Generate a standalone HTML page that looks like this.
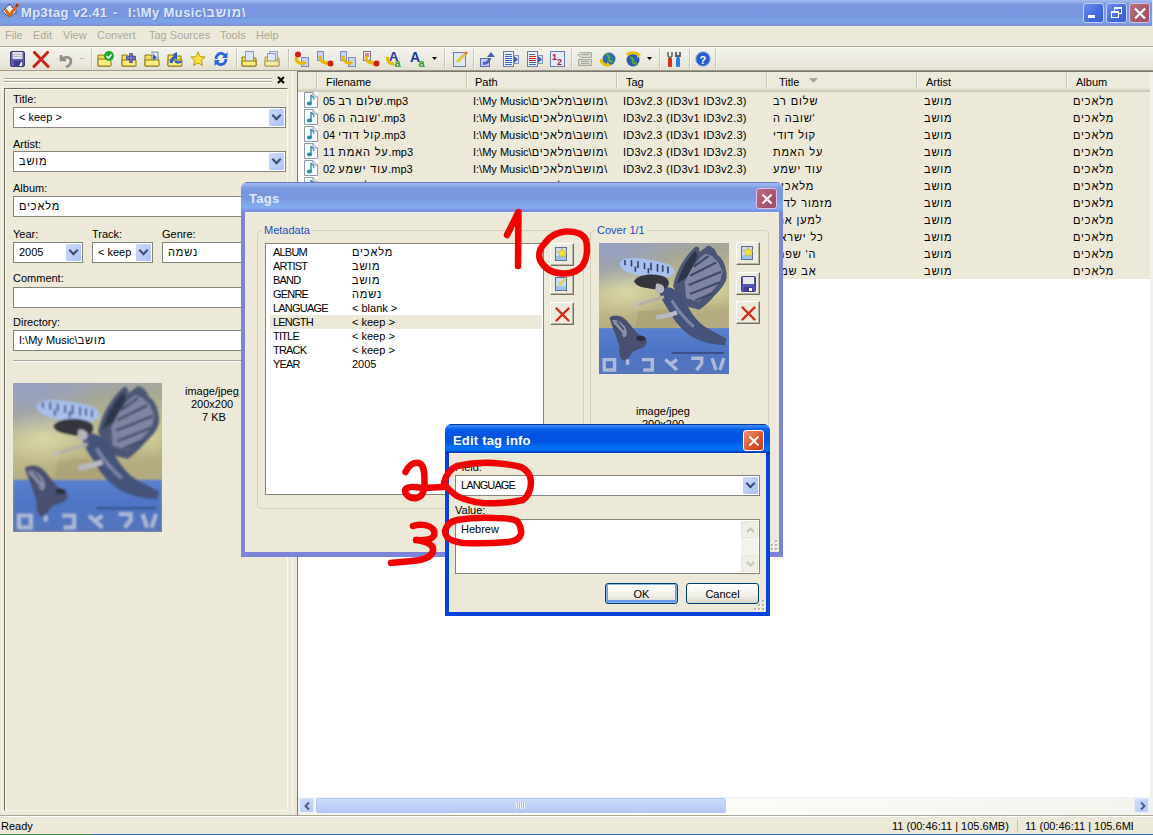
<!DOCTYPE html>
<html><head><meta charset="utf-8">
<style>
*{margin:0;padding:0;box-sizing:border-box}
html,body{width:1153px;height:835px;overflow:hidden;background:#ECE9D8;font:11px/13px "Liberation Sans",sans-serif;color:#000}
.a{position:absolute}
.t{position:absolute;white-space:pre;font:11px/13px "Liberation Sans",sans-serif}
.edit{position:absolute;background:#fff;border:1px solid #84847A}
.ddb{position:absolute;width:15px;top:1px;bottom:1px;right:1px;background:linear-gradient(135deg,#CCDAFC 0%,#BCCEF8 50%,#ADC2F2 100%);border-radius:1px}
.ddb:after{content:"";position:absolute;left:4px;top:3px;width:5px;height:5px;border-right:2.5px solid #3C4C70;border-bottom:2.5px solid #3C4C70;transform:rotate(45deg);}
.hdr{position:absolute;top:0;height:19px;border-right:1px solid #C7C5B2}
.row{position:absolute;left:0;width:852px;height:17px;background:#ECE9D8}
.xpbtn{position:absolute;background:linear-gradient(#FFFFFF,#F0F0EA 60%,#D8D6C8);border:1px solid #003C74;border-radius:3px}
.sep{position:absolute;top:49px;width:2px;height:20px;border-left:1px solid #C8C5B4;border-right:1px solid #F8F7F2}
.ficon{position:absolute;width:14px;height:16px}
.ttl{font:bold 13px/15px 'Liberation Sans';color:#DCE6FA;letter-spacing:0.4px;text-shadow:1px 1px 0 #6A80C8}
.he{letter-spacing:0.85px}
.tbtn{position:absolute;width:24px;height:23px;background:#EEEBDD;border-top:1px solid #fff;border-left:1px solid #fff;border-right:1px solid #716F64;border-bottom:1px solid #716F64;box-shadow:inset -1px -1px 0 #B8B5A6}
</style></head>
<body>
<svg width="0" height="0" style="position:absolute">
<defs>
<linearGradient id="gbg" x1="0" y1="0" x2="0.15" y2="1">
<stop offset="0" stop-color="#9AA2B8"/><stop offset="0.2" stop-color="#A8A894"/><stop offset="0.42" stop-color="#C4C090"/><stop offset="0.66" stop-color="#B4AC80"/></linearGradient>
<radialGradient id="gglow" cx="0.2" cy="0.55" r="0.3"><stop offset="0" stop-color="#DCD8A8" stop-opacity="0.9"/><stop offset="1" stop-color="#DCD8A8" stop-opacity="0"/></radialGradient>
<radialGradient id="gglow2" cx="0.9" cy="0.55" r="0.22"><stop offset="0" stop-color="#D4D09A" stop-opacity="0.9"/><stop offset="1" stop-color="#D4D09A" stop-opacity="0"/></radialGradient>
<radialGradient id="gsky" cx="0.1" cy="0.05" r="0.5"><stop offset="0" stop-color="#96A0C4" stop-opacity="0.9"/><stop offset="1" stop-color="#96A0C4" stop-opacity="0"/></radialGradient>
<linearGradient id="gwater" x1="0" y1="0" x2="0" y2="1"><stop offset="0" stop-color="#5A80D0"/><stop offset="0.5" stop-color="#4E74C4"/><stop offset="1" stop-color="#5474BC"/></linearGradient>
<filter id="fblur" x="-5%" y="-5%" width="110%" height="110%"><feGaussianBlur stdDeviation="0.6"/></filter>
<symbol id="art" viewBox="0 0 100 100" preserveAspectRatio="none">
<rect width="100" height="100" fill="url(#gbg)"/><g filter="url(#fblur)">
<rect width="100" height="66" fill="url(#gglow)"/>
<rect width="100" height="66" fill="url(#gglow2)"/>
<rect width="100" height="66" fill="url(#gsky)"/>
<path d="M30 52L62 50L60 65H28Z" fill="#A89C74" opacity="0.6"/>
<rect x="0" y="65" width="100" height="35" fill="url(#gwater)"/>
<path d="M16 15C19 10 30 11 40 13C50 15 57 16 58 21C58 26 50 27 40 26C27 25 15 21 16 15Z" fill="#A8C0EE"/>
<path d="M20 13V17M25 13V18M30 14V19M35 15V20M40 15V21M45 16V22M49 17V22M28 18V22M38 19V23M53 18V23" stroke="#2C3C64" stroke-width="1.2"/>
<path d="M57 33C59 22 66 10 74 3C76 2 78 4 77 7L84 2C88 3 90 6 91 9C94 11 96 14 97 18C98 22 99 26 97 30C95 34 92 37 89 40C85 45 81 48 77 51L66 48Z" fill="#4C5674"/>
<path d="M60 31C63 21 68 12 74 6L76 10L68 26Z" fill="#2E364C"/>
<path d="M66 30C70 20 76 12 82 8L87 10L92 15L95 22L93 30L86 38L76 45L67 42Z" fill="#7E84A2"/>
<path d="M73 18L84 10M70 25L90 15M69 32L94 22M70 39L93 30M74 44L88 38" stroke="#3E4866" stroke-width="1.6"/>
<path d="M46 34C54 32 62 36 66 44C70 52 74 58 80 63C86 67 93 70 98 73L97 78C89 78 80 76 72 72C64 67 58 60 54 52C50 46 46 40 46 34Z" fill="#44527A"/>
<path d="M56 44C61 52 66 58 73 64" stroke="#7A84A6" stroke-width="2.4" fill="none"/>
<path d="M27 29C30 24 40 23 48 25C53 26 55 30 53 33C50 36 45 36 40 35C34 34 28 33 27 29Z" fill="#34343E"/>
<path d="M44 31C48 31 51 33 50 36C49 39 45 39 43 37Z" fill="#B8B4BC"/>
<path d="M50 41C44 43 36 45 30 47" stroke="#B6AEA8" stroke-width="2.4"/>
<circle cx="29" cy="47.5" r="2.4" fill="#C8BEB0"/>
<path d="M60 53C55 55 50 56 44 57" stroke="#B8BAC4" stroke-width="3.4"/>
<path d="M8 57C12 54 18 55 22 60C26 65 29 69 33 72C36 73 38 75 36 78C33 81 29 81 26 83C24 86 22 89 19 90C16 88 15 84 16 80C14 73 11 66 8 57Z" fill="#4A5070"/>
<path d="M10 59C13 58 17 60 20 64C22 68 22 72 19 72C16 69 13 65 10 59Z" fill="#8A90AA"/>
<path d="M14 60L19 66M12 63L18 70" stroke="#3A4060" stroke-width="1"/>
<path d="M29 71C32 70 35 71 36 73C35 75 32 75 29 74Z" fill="#2C2E3C"/>
<path d="M56 84H96" stroke="#34467C" stroke-width="1.6" opacity="0.8"/>
<path d="M4 89H12V97H4Z M22 89V93 M33 89H41V97H34 M51 89L60 97M60 89L54 93 M71 88H79V92L75 97 M87 88L90 97M96 88L93 97" stroke="#C4CCDC" stroke-width="2.6" fill="none" opacity="0.8"/>
</g></symbol>
</defs></svg>

<!-- ===== TITLE BAR (inactive) ===== -->
<div class="a" style="left:0;top:0;width:1153px;height:26px;background:linear-gradient(#9DB9EF 0px,#98B2EC 2px,#7B97E0 4px,#7896DF 14px,#7BA1E6 21px,#7A9FE4 23px,#8090DA 25px)"></div>
<svg class="a" style="left:0;top:0" width="22" height="22"><path d="M9.5 4.3L16.7 11.8L9.5 17L2.3 11.5Z" fill="#F4F6FA" stroke="#2A3A70" stroke-width="1.1" stroke-dasharray="1.2 0.6"/><path d="M6 10.5L9.5 15.5L17.8 4.5" stroke="#D86A10" stroke-width="3" fill="none" stroke-linecap="round"/><path d="M16 6.5L17.8 4.5" stroke="#6A3A50" stroke-width="2.4"/></svg>
<div class="t ttl" style="left:21px;top:5px">Mp3tag v2.41</div><div class="t ttl" style="left:113px;top:5px">-</div><div class="t ttl" style="left:128px;top:5px">I:\My Music\<span class="he">מושב</span>\&lrm;</div>
<!-- caption buttons -->
<div class="a" style="left:1083px;top:3px;width:21px;height:20px;border:1px solid #C0D0F4;border-radius:3px;background:linear-gradient(135deg,#6A8CEA,#4468DC 60%,#3A5ED6)"><div class="a" style="left:4px;top:11px;width:7px;height:3px;background:#fff"></div></div>
<div class="a" style="left:1106px;top:3px;width:21px;height:20px;border:1px solid #C0D0F4;border-radius:3px;background:linear-gradient(135deg,#6A8CEA,#4468DC 60%,#3A5ED6)"><div class="a" style="left:7px;top:3px;width:8px;height:7px;border:1px solid #fff;border-top-width:2px"></div><div class="a" style="left:4px;top:7px;width:8px;height:7px;border:1px solid #fff;border-top-width:2px;background:#4F72DE"></div></div>
<div class="a" style="left:1129px;top:3px;width:21px;height:20px;border:1px solid #D8C0D8;border-radius:3px;background:linear-gradient(135deg,#B8707E,#A85868 60%,#A05064)"><svg class="a" style="left:3px;top:3px" width="14" height="13"><path d="M2 1.5L12 11.5M12 1.5L2 11.5" stroke="#fff" stroke-width="2.2"/></svg></div>
<div class="a" style="left:1152px;top:0;width:1px;height:26px;background:#E8ECF8"></div>
<!-- ===== MENU ===== -->
<div class="a" style="left:0;top:26px;width:1153px;height:20px;background:#ECE9D8"></div>
<div class="t" style="left:5px;top:29px;color:#ACA899">File</div>
<div class="t" style="left:33px;top:29px;color:#ACA899">Edit</div>
<div class="t" style="left:63px;top:29px;color:#ACA899">View</div>
<div class="t" style="left:97px;top:29px;color:#ACA899">Convert</div>
<div class="t" style="left:149px;top:29px;color:#ACA899">Tag Sources</div>
<div class="t" style="left:220px;top:29px;color:#ACA899">Tools</div>
<div class="t" style="left:256px;top:29px;color:#ACA899">Help</div>
<div class="a" style="left:0;top:46px;width:1153px;height:1px;background:#A9A796"></div>
<div class="a" style="left:0;top:47px;width:1153px;height:1px;background:#FAFAF6"></div>

<!-- ===== TOOLBAR ===== -->
<div class="a" style="left:0;top:48px;width:1153px;height:23px;background:linear-gradient(#F3F2EB,#ECEADF 60%,#E1DED0)"></div>
<div class="a" style="left:0;top:70px;width:1153px;height:1px;background:#9D9B8B"></div>
<!-- toolbar icons -->
<svg class="a" style="left:10px;top:51px" width="16" height="16"><rect x="0.5" y="0.5" width="14" height="15" rx="1.5" fill="#5C5CB4" stroke="#3A3A74"/><rect x="2.5" y="1" width="10" height="7" fill="#E2E2E8"/><path d="M3 3.5H12M3 5.5H12" stroke="#B8B8C4"/><rect x="4" y="10" width="8" height="6" fill="#3E3E8E"/><path d="M9 15L11 11H12V15Z" fill="#F4F4FA"/></svg>
<svg class="a" style="left:32px;top:51px" width="18" height="17"><path d="M2.5 1.5L16 15.5M15.5 1.5L2 15.5" stroke="#CC2414" stroke-width="3" stroke-linecap="round"/></svg>
<svg class="a" style="left:57px;top:52px" width="16" height="16"><path d="M4 3V8H9" stroke="#8E8E8E" stroke-width="2.6" fill="none"/><path d="M5 7C8 4 14 5 14 9C14 12 12 14 9 15" stroke="#8E8E8E" stroke-width="2.6" fill="none"/></svg>
<div class="a" style="left:80px;top:58px;width:4px;height:1px;background:#B8B6A8"></div>
<div class="a sep" style="left:91px"></div>
<svg class="a" style="left:97px;top:51px" width="18" height="16"><path d="M1 4H6L7 5H13V15H1Z" fill="#F2DC50" stroke="#8A7618"/><path d="M1 8H14V15H1Z" fill="#FAEE80" stroke="#8A7618"/><circle cx="12" cy="5" r="5" fill="#1EAA2A"/><path d="M9.5 5L11.5 7L14.5 3.5" stroke="#fff" stroke-width="1.6" fill="none"/></svg>
<svg class="a" style="left:121px;top:51px" width="16" height="16"><path d="M1 4H6L7 5H14V15H1Z" fill="#F2DC50" stroke="#8A7618"/><path d="M1 9H15V15H1Z" fill="#FAEE80" stroke="#8A7618"/><path d="M10 2V12M5 7H15" stroke="#44448E" stroke-width="3.4"/><path d="M10 2.5V11.5M5.5 7H14.5" stroke="#7C7CD8" stroke-width="1.4"/></svg>
<svg class="a" style="left:144px;top:51px" width="16" height="16"><path d="M1 4H6L7 5H14V15H1Z" fill="#F2DC50" stroke="#8A7618"/><rect x="8" y="1" width="6" height="11" fill="#E6ECF8" stroke="#7C8CB8"/><path d="M9 3L13 6.5L9 10Z" fill="#3A58B8"/><path d="M1 9H15V15H1Z" fill="#FAEE80" stroke="#8A7618"/></svg>
<svg class="a" style="left:167px;top:51px" width="16" height="16"><path d="M1 4H6L7 5H14V15H1Z" fill="#F2DC50" stroke="#8A7618"/><path d="M1 9H15V15H1Z" fill="#FAEE80" stroke="#8A7618"/><path d="M4 12C5 8 7 6 9 6" stroke="#2E5CC0" stroke-width="3" fill="none"/><path d="M6 3L10 1V9Z" fill="#2E5CC0"/><path d="M8 10C10 12 13 12 14 10" stroke="#2E5CC0" stroke-width="2.4" fill="none"/></svg>
<svg class="a" style="left:190px;top:51px" width="16" height="16"><path d="M8 0.8L10.1 5.6L15.2 6L11.3 9.3L12.5 14.6L8 11.8L3.5 14.6L4.7 9.3L0.8 6L5.9 5.6Z" fill="#F8E23C" stroke="#B69A1C" stroke-width="1"/></svg>
<svg class="a" style="left:213px;top:51px" width="16" height="16"><path d="M3 8C3 4 6 2 9 2.5C11 3 12 4 12.5 5" stroke="#2A66D6" stroke-width="2.8" fill="none"/><path d="M14.5 1V7H9Z" fill="#2A66D6"/><path d="M13 8C13 12 10 14 7 13.5C5 13 4 12 3.5 11" stroke="#2A66D6" stroke-width="2.8" fill="none"/><path d="M1.5 15V9H7Z" fill="#2A66D6"/></svg>
<div class="a sep" style="left:236px"></div>
<svg class="a" style="left:241px;top:51px" width="16" height="16"><path d="M1 6H5L6 7H15V15H1Z" fill="#F2DC50" stroke="#8A7618"/><rect x="4.5" y="0.5" width="8" height="10" fill="#DDE6F6" stroke="#8A98B8"/><path d="M1 10H15V15H1Z" fill="#FAEE80" stroke="#8A7618"/></svg>
<svg class="a" style="left:264px;top:51px" width="16" height="16"><path d="M1 6H5L6 7H15V15H1Z" fill="#EFE08A" stroke="#A8984A"/><rect x="5.5" y="0.5" width="8" height="8" fill="#E8ECF4" stroke="#98A0B8"/><rect x="3.5" y="2.5" width="8" height="8" fill="#DDE6F6" stroke="#8A98B8"/><path d="M1 10H15V15H1Z" fill="#F2ECA8" stroke="#A8984A"/></svg>
<div class="a sep" style="left:288px"></div>
<svg class="a" style="left:294px;top:51px" width="16" height="16"><rect x="7.5" y="6.5" width="7" height="9" fill="#C8D4F4" stroke="#7C88C0"/><path d="M2 6C2 11 5 13 10 12" stroke="#E8B800" stroke-width="3" fill="none"/><path d="M9 9L13 12L9 15Z" fill="#E8B800"/><circle cx="4" cy="3.5" r="3" fill="#D81818"/></svg>
<svg class="a" style="left:317px;top:51px" width="17" height="16"><rect x="0.5" y="0.5" width="6" height="9" fill="#C8D4F4" stroke="#7C88C0"/><path d="M3 5C3 10 5 12 10 12" stroke="#E8B800" stroke-width="3" fill="none"/><path d="M9 9L12 12L9 15Z" fill="#E8B800"/><circle cx="13.5" cy="12.5" r="3" fill="#C82010"/></svg>
<svg class="a" style="left:340px;top:51px" width="16" height="16"><rect x="0.5" y="0.5" width="6" height="9" fill="#C8D4F4" stroke="#7C88C0"/><rect x="8.5" y="6.5" width="7" height="9" fill="#C8D4F4" stroke="#7C88C0"/><path d="M3 5C3 10 5 12 10 12" stroke="#E8B800" stroke-width="3" fill="none"/><path d="M9 9L13 12L9 15Z" fill="#E8B800"/></svg>
<svg class="a" style="left:363px;top:51px" width="17" height="16"><rect x="0.5" y="0.5" width="7" height="9" fill="#F0F0F4" stroke="#707488"/><path d="M2 3H6M2 5H6" stroke="#C02020" stroke-width="1"/><path d="M3 5C3 10 5 12 10 12" stroke="#E8B800" stroke-width="3" fill="none"/><path d="M9 9L12 12L9 15Z" fill="#E8B800"/><circle cx="13.5" cy="12.5" r="3" fill="#C82010"/></svg>
<svg class="a" style="left:386px;top:50px" width="18" height="18"><text x="3" y="11" font-family="Liberation Sans" font-weight="bold" font-size="13" fill="#1A3A9A">A</text><path d="M1.5 7C1.5 12 4 14 8 14" stroke="#E8B400" stroke-width="3.2" fill="none"/><text x="8.5" y="17" font-family="Liberation Sans" font-weight="bold" font-size="11" fill="#2A9A2A">a</text></svg>
<svg class="a" style="left:410px;top:50px" width="18" height="18"><text x="0" y="12" font-family="Liberation Sans" font-weight="bold" font-size="14" fill="#1A3A9A">A</text><text x="8.5" y="17" font-family="Liberation Sans" font-weight="bold" font-size="11" fill="#2A9A2A">a</text></svg>
<svg class="a" style="left:432px;top:57px" width="6" height="4"><path d="M0 0H5L2.5 3Z" fill="#000"/></svg>
<div class="a sep" style="left:444px"></div>
<svg class="a" style="left:453px;top:51px" width="16" height="16"><rect x="0.5" y="1.5" width="12" height="14" fill="#DDE8F8" stroke="#6C7CA8"/><path d="M4 11L13 2" stroke="#E8C43C" stroke-width="3"/><path d="M12 3L14 1" stroke="#E07060" stroke-width="3"/></svg>
<div class="a sep" style="left:473px"></div>
<svg class="a" style="left:480px;top:51px" width="16" height="16"><rect x="0.5" y="7.5" width="9" height="8" fill="#C0CCF0" stroke="#5C6CA8"/><path d="M3 12C6 13 9 11 10 7" stroke="#5060B8" stroke-width="3" fill="none"/><path d="M7 6L11 1L15 6Z" fill="#5060B8"/></svg>
<svg class="a" style="left:503px;top:51px" width="16" height="16"><rect x="0.5" y="0.5" width="10" height="15" fill="#EEF2FA" stroke="#6C7CA8"/><path d="M2 3.5H9M2 5.5H9M2 7.5H9M2 9.5H9M2 11.5H9M2 13.5H9" stroke="#3A6AC8" stroke-width="1"/><rect x="10.5" y="4.5" width="5" height="8" fill="#E0E8F8" stroke="#8090C0"/><path d="M11 5L15 8.5L11 12Z" fill="#4A5AA8"/></svg>
<svg class="a" style="left:527px;top:51px" width="16" height="16"><rect x="0.5" y="0.5" width="10" height="15" fill="#EEF2FA" stroke="#6C7CA8"/><path d="M2 3.5H8M2 11.5H9M2 13.5H9" stroke="#3A6AC8" stroke-width="1"/><path d="M2 5.5H9M2 7.5H9M2 9.5H9" stroke="#D02020" stroke-width="1"/><rect x="10.5" y="4.5" width="5" height="8" fill="#E0E8F8" stroke="#8090C0"/><path d="M11 5L15 8.5L11 12Z" fill="#4A5AA8"/></svg>
<svg class="a" style="left:550px;top:51px" width="16" height="16"><rect x="0.5" y="0.5" width="14" height="15" fill="#E4ECFA" stroke="#6C7CA8"/><text x="2" y="9" font-family="Liberation Sans" font-weight="bold" font-size="9" fill="#A01830">1</text><text x="7" y="14" font-family="Liberation Sans" font-weight="bold" font-size="9" fill="#A01830">2</text></svg>
<div class="a sep" style="left:571px"></div>
<svg class="a" style="left:577px;top:51px" width="16" height="16"><path d="M3.5 1.5H14.5V6.5H3.5L1 4Z" fill="#D8D8D0" stroke="#A8A8A0"/><path d="M1.5 8.5H14.5V14.5H1.5Z" fill="#D8D8D0" stroke="#A8A8A0"/><path d="M4 3.5H12M4 10.5H12M4 12.5H12" stroke="#A8A8A0"/></svg>
<svg class="a" style="left:600px;top:51px" width="16" height="16"><circle cx="9" cy="8" r="6.5" fill="#2C6CB8"/><path d="M6 3C8 4 10 6 9 8C8 10 11 11 13 10" stroke="#58A838" stroke-width="2.4" fill="none"/><path d="M1 8C1 12 4 14 8 14" stroke="#E8C000" stroke-width="3" fill="none"/><path d="M7 11L11 14L7 16Z" fill="#E8C000"/></svg>
<svg class="a" style="left:625px;top:51px" width="16" height="16"><circle cx="8" cy="9" r="6.5" fill="#2C5CA8"/><path d="M5 6C7 7 9 8 8 10C7 12 10 13 12 12" stroke="#58A838" stroke-width="2.4" fill="none"/><path d="M2 4C4 1 11 1 14 4" stroke="#E8C000" stroke-width="3" fill="none"/><path d="M12 1L16 4L12 7Z" fill="#E8C000"/></svg>
<svg class="a" style="left:647px;top:57px" width="6" height="4"><path d="M0 0H5L2.5 3Z" fill="#000"/></svg>
<div class="a sep" style="left:659px"></div>
<svg class="a" style="left:666px;top:51px" width="16" height="16"><path d="M2 1V5L4 7L6 5V1" stroke="#606060" stroke-width="1.5" fill="none"/><rect x="2" y="7" width="4" height="9" rx="1" fill="#D82C1C"/><path d="M10 1V5H14V1" stroke="#505868" stroke-width="1.8" fill="none"/><rect x="10" y="6" width="4" height="10" rx="1.5" fill="#2C7CD8"/></svg>
<div class="a sep" style="left:689px"></div>
<svg class="a" style="left:695px;top:51px" width="16" height="16"><circle cx="8" cy="8" r="7.3" fill="#2A5CCE" stroke="#A8BCE8" stroke-width="1"/><text x="4.5" y="12.5" font-family="Liberation Sans" font-weight="bold" font-size="11" fill="#fff">?</text></svg>
<div class="a sep" style="left:715px"></div>


<!-- ===== LEFT PANEL ===== -->
<div class="a" style="left:0;top:71px;width:297px;height:745px;background:#ECE9D8"></div>
<div class="a" style="left:4px;top:78px;width:268px;height:1px;background:#A8A694"></div>
<div class="a" style="left:4px;top:79px;width:268px;height:1px;background:#fff"></div>
<div class="a" style="left:4px;top:81px;width:268px;height:1px;background:#A8A694"></div>
<div class="a" style="left:4px;top:82px;width:268px;height:1px;background:#fff"></div>
<svg class="a" style="left:277px;top:76px" width="8" height="8"><path d="M1 1L7 7M7 1L1 7" stroke="#000" stroke-width="2"/></svg>
<div class="a" style="left:1px;top:86px;width:2px;height:727px;background:#F4F2E6"></div>
<div class="a" style="left:4px;top:88px;width:284px;height:723px;box-shadow:inset 1px 1px 0 #FAF8EE;border-left:1px solid #716F60;border-top:1px solid #716F60;border-right:1px solid #F8F7F0;border-bottom:1px solid #F8F7F0"></div>
<div class="a" style="left:292px;top:71px;width:1px;height:745px;background:#F7F6F0"></div>

<div class="t" style="left:13px;top:93px">Title:</div>
<div class="edit" style="left:13px;top:107px;width:273px;height:21px"><div class="t" style="left:5px;top:3px">&lt; keep &gt;</div><div class="ddb"></div></div>
<div class="t" style="left:13px;top:138px">Artist:</div>
<div class="edit" style="left:13px;top:151px;width:273px;height:21px"><div class="t" style="left:5px;top:3px"><span class="he">מושב</span></div><div class="ddb"></div></div>
<div class="t" style="left:13px;top:182px">Album:</div>
<div class="edit" style="left:13px;top:196px;width:273px;height:21px"><div class="t" style="left:5px;top:3px"><span class="he">מלאכים</span></div></div>
<div class="t" style="left:13px;top:228px">Year:</div>
<div class="edit" style="left:13px;top:242px;width:70px;height:21px"><div class="t" style="left:5px;top:3px">2005</div><div class="ddb"></div></div>
<div class="t" style="left:92px;top:228px">Track:</div>
<div class="edit" style="left:92px;top:242px;width:61px;height:21px"><div class="t" style="left:5px;top:3px;width:33px;overflow:hidden">&lt; keep &gt;</div><div class="ddb"></div></div>
<div class="t" style="left:162px;top:228px">Genre:</div>
<div class="edit" style="left:162px;top:242px;width:124px;height:21px"><div class="t" style="left:5px;top:3px"><span class="he">נשמה</span></div><div class="ddb"></div></div>
<div class="t" style="left:13px;top:272px">Comment:</div>
<div class="edit" style="left:13px;top:287px;width:273px;height:21px"></div>
<div class="t" style="left:13px;top:316px">Directory:</div>
<div class="edit" style="left:13px;top:330px;width:273px;height:21px"><div class="t" style="left:5px;top:3px">I:\My Music\<span class="he">מושב</span></div></div>
<div class="a" style="left:13px;top:360px;width:273px;height:1px;background:#ACA899"></div>
<div class="a" style="left:13px;top:361px;width:273px;height:1px;background:#fff"></div>
<svg class="a" style="left:13px;top:383px" width="149" height="149"><use href="#art"/></svg>
<div class="t" style="left:185px;top:385px">image/jpeg</div>
<div class="t" style="left:191px;top:398px">200x200</div>
<div class="t" style="left:202px;top:411px">7 KB</div>

<!-- ===== LIST VIEW ===== -->
<div class="a" style="left:297px;top:71px;width:856px;height:745px;background:#fff;border-left:1px solid #7A786C;border-top:1px solid #7A786C"></div>
<div class="a" id="list" style="left:298px;top:72px;width:852px;height:743px;overflow:hidden">
  <div class="a" style="left:0;top:0;width:852px;height:20px;background:linear-gradient(#EBEADB 0,#EBEADB 15px,#E2DFCF 17px,#D0CDBD 19px,#C0BEAE 20px)"></div>
  <div class="a" style="left:18px;top:1px;width:1px;height:16px;background:#C7C5B2"></div><div class="a" style="left:19px;top:1px;width:1px;height:16px;background:#F6F5EE"></div>
  <div class="a" style="left:168px;top:1px;width:1px;height:16px;background:#C7C5B2"></div><div class="a" style="left:169px;top:1px;width:1px;height:16px;background:#F6F5EE"></div>
  <div class="a" style="left:318px;top:1px;width:1px;height:16px;background:#C7C5B2"></div><div class="a" style="left:319px;top:1px;width:1px;height:16px;background:#F6F5EE"></div>
  <div class="a" style="left:468px;top:1px;width:1px;height:16px;background:#C7C5B2"></div><div class="a" style="left:469px;top:1px;width:1px;height:16px;background:#F6F5EE"></div>
  <div class="a" style="left:618px;top:1px;width:1px;height:16px;background:#C7C5B2"></div><div class="a" style="left:619px;top:1px;width:1px;height:16px;background:#F6F5EE"></div>
  <div class="a" style="left:768px;top:1px;width:1px;height:16px;background:#C7C5B2"></div><div class="a" style="left:769px;top:1px;width:1px;height:16px;background:#F6F5EE"></div>
  <div class="t" style="left:28px;top:4px">Filename</div>
  <div class="t" style="left:177px;top:4px">Path</div>
  <div class="t" style="left:328px;top:4px">Tag</div>
  <div class="t" style="left:481px;top:4px">Title</div>
  <svg class="a" style="left:511px;top:6px" width="10" height="6"><path d="M0 0H9L4.5 5Z" fill="#A8A797"/></svg>
  <div class="t" style="left:628px;top:4px">Artist</div>
  <div class="t" style="left:778px;top:4px">Album</div>
  <div class="a" style="left:20px;top:20px;width:832px;height:17px;background:#ECE9D8"></div>
<div class="ficon" style="left:6px;top:20px"><svg width="14" height="16"><path d="M0.5 0.5H9L13.5 5V15.5H0.5Z" fill="#F8FAFC" stroke="#8C9AB0"/><path d="M9 0.5V5H13.5" fill="#DCE4EE" stroke="#8C9AB0"/><path d="M7 3V11" stroke="#2A8AB4" stroke-width="1.4"/><ellipse cx="5.5" cy="11.5" rx="2.6" ry="2" fill="#2A8AB4"/><path d="M7 3C8 5 10 5 10 8" stroke="#2A8AB4" stroke-width="1.2" fill="none"/></svg></div>
<div class="t" style="left:25px;top:23px">05 <span class="he">שלום רב</span>.mp3</div>
<div class="t" style="left:175px;top:23px">I:\My Music\<span class="he">מושב</span>\<span class="he">מלאכים</span>\</div>
<div class="t" style="left:325px;top:23px;letter-spacing:0.25px">ID3v2.3 (ID3v1 ID3v2.3)</div>
<div class="t" style="left:475px;top:23px"><span class="he">שלום רב</span></div>
<div class="t" style="left:626px;top:23px"><span class="he">מושב</span></div>
<div class="t" style="left:775px;top:23px"><span class="he">מלאכים</span></div>
<div class="a" style="left:20px;top:37px;width:832px;height:17px;background:#ECE9D8"></div>
<div class="ficon" style="left:6px;top:37px"><svg width="14" height="16"><path d="M0.5 0.5H9L13.5 5V15.5H0.5Z" fill="#F8FAFC" stroke="#8C9AB0"/><path d="M9 0.5V5H13.5" fill="#DCE4EE" stroke="#8C9AB0"/><path d="M7 3V11" stroke="#2A8AB4" stroke-width="1.4"/><ellipse cx="5.5" cy="11.5" rx="2.6" ry="2" fill="#2A8AB4"/><path d="M7 3C8 5 10 5 10 8" stroke="#2A8AB4" stroke-width="1.2" fill="none"/></svg></div>
<div class="t" style="left:25px;top:40px">06 <span class="he">שובה ה'</span>.mp3</div>
<div class="t" style="left:175px;top:40px">I:\My Music\<span class="he">מושב</span>\<span class="he">מלאכים</span>\</div>
<div class="t" style="left:325px;top:40px;letter-spacing:0.25px">ID3v2.3 (ID3v1 ID3v2.3)</div>
<div class="t" style="left:475px;top:40px"><span class="he">שובה ה'</span></div>
<div class="t" style="left:626px;top:40px"><span class="he">מושב</span></div>
<div class="t" style="left:775px;top:40px"><span class="he">מלאכים</span></div>
<div class="a" style="left:20px;top:54px;width:832px;height:17px;background:#ECE9D8"></div>
<div class="ficon" style="left:6px;top:54px"><svg width="14" height="16"><path d="M0.5 0.5H9L13.5 5V15.5H0.5Z" fill="#F8FAFC" stroke="#8C9AB0"/><path d="M9 0.5V5H13.5" fill="#DCE4EE" stroke="#8C9AB0"/><path d="M7 3V11" stroke="#2A8AB4" stroke-width="1.4"/><ellipse cx="5.5" cy="11.5" rx="2.6" ry="2" fill="#2A8AB4"/><path d="M7 3C8 5 10 5 10 8" stroke="#2A8AB4" stroke-width="1.2" fill="none"/></svg></div>
<div class="t" style="left:25px;top:57px">04 <span class="he">קול דודי</span>.mp3</div>
<div class="t" style="left:175px;top:57px">I:\My Music\<span class="he">מושב</span>\<span class="he">מלאכים</span>\</div>
<div class="t" style="left:325px;top:57px;letter-spacing:0.25px">ID3v2.3 (ID3v1 ID3v2.3)</div>
<div class="t" style="left:475px;top:57px"><span class="he">קול דודי</span></div>
<div class="t" style="left:626px;top:57px"><span class="he">מושב</span></div>
<div class="t" style="left:775px;top:57px"><span class="he">מלאכים</span></div>
<div class="a" style="left:20px;top:71px;width:832px;height:17px;background:#ECE9D8"></div>
<div class="ficon" style="left:6px;top:71px"><svg width="14" height="16"><path d="M0.5 0.5H9L13.5 5V15.5H0.5Z" fill="#F8FAFC" stroke="#8C9AB0"/><path d="M9 0.5V5H13.5" fill="#DCE4EE" stroke="#8C9AB0"/><path d="M7 3V11" stroke="#2A8AB4" stroke-width="1.4"/><ellipse cx="5.5" cy="11.5" rx="2.6" ry="2" fill="#2A8AB4"/><path d="M7 3C8 5 10 5 10 8" stroke="#2A8AB4" stroke-width="1.2" fill="none"/></svg></div>
<div class="t" style="left:25px;top:74px">11 <span class="he">על האמת</span>.mp3</div>
<div class="t" style="left:175px;top:74px">I:\My Music\<span class="he">מושב</span>\<span class="he">מלאכים</span>\</div>
<div class="t" style="left:325px;top:74px;letter-spacing:0.25px">ID3v2.3 (ID3v1 ID3v2.3)</div>
<div class="t" style="left:475px;top:74px"><span class="he">על האמת</span></div>
<div class="t" style="left:626px;top:74px"><span class="he">מושב</span></div>
<div class="t" style="left:775px;top:74px"><span class="he">מלאכים</span></div>
<div class="a" style="left:20px;top:88px;width:832px;height:17px;background:#ECE9D8"></div>
<div class="ficon" style="left:6px;top:88px"><svg width="14" height="16"><path d="M0.5 0.5H9L13.5 5V15.5H0.5Z" fill="#F8FAFC" stroke="#8C9AB0"/><path d="M9 0.5V5H13.5" fill="#DCE4EE" stroke="#8C9AB0"/><path d="M7 3V11" stroke="#2A8AB4" stroke-width="1.4"/><ellipse cx="5.5" cy="11.5" rx="2.6" ry="2" fill="#2A8AB4"/><path d="M7 3C8 5 10 5 10 8" stroke="#2A8AB4" stroke-width="1.2" fill="none"/></svg></div>
<div class="t" style="left:25px;top:91px">02 <span class="he">עוד ישמע</span>.mp3</div>
<div class="t" style="left:175px;top:91px">I:\My Music\<span class="he">מושב</span>\<span class="he">מלאכים</span>\</div>
<div class="t" style="left:325px;top:91px;letter-spacing:0.25px">ID3v2.3 (ID3v1 ID3v2.3)</div>
<div class="t" style="left:475px;top:91px"><span class="he">עוד ישמע</span></div>
<div class="t" style="left:626px;top:91px"><span class="he">מושב</span></div>
<div class="t" style="left:775px;top:91px"><span class="he">מלאכים</span></div>
<div class="a" style="left:20px;top:105px;width:832px;height:17px;background:#ECE9D8"></div>
<div class="ficon" style="left:6px;top:105px"><svg width="14" height="16"><path d="M0.5 0.5H9L13.5 5V15.5H0.5Z" fill="#F8FAFC" stroke="#8C9AB0"/><path d="M9 0.5V5H13.5" fill="#DCE4EE" stroke="#8C9AB0"/><path d="M7 3V11" stroke="#2A8AB4" stroke-width="1.4"/><ellipse cx="5.5" cy="11.5" rx="2.6" ry="2" fill="#2A8AB4"/><path d="M7 3C8 5 10 5 10 8" stroke="#2A8AB4" stroke-width="1.2" fill="none"/></svg></div>
<div class="t" style="left:25px;top:108px">01 <span class="he">מלאכים</span>.mp3</div>
<div class="t" style="left:175px;top:108px">I:\My Music\<span class="he">מושב</span>\<span class="he">מלאכים</span>\</div>
<div class="t" style="left:325px;top:108px;letter-spacing:0.25px">ID3v2.3 (ID3v1 ID3v2.3)</div>
<div class="t" style="left:475px;top:108px"><span class="he">מלאכים</span></div>
<div class="t" style="left:626px;top:108px"><span class="he">מושב</span></div>
<div class="t" style="left:775px;top:108px"><span class="he">מלאכים</span></div>
<div class="a" style="left:20px;top:122px;width:832px;height:17px;background:#ECE9D8"></div>
<div class="ficon" style="left:6px;top:122px"><svg width="14" height="16"><path d="M0.5 0.5H9L13.5 5V15.5H0.5Z" fill="#F8FAFC" stroke="#8C9AB0"/><path d="M9 0.5V5H13.5" fill="#DCE4EE" stroke="#8C9AB0"/><path d="M7 3V11" stroke="#2A8AB4" stroke-width="1.4"/><ellipse cx="5.5" cy="11.5" rx="2.6" ry="2" fill="#2A8AB4"/><path d="M7 3C8 5 10 5 10 8" stroke="#2A8AB4" stroke-width="1.2" fill="none"/></svg></div>
<div class="t" style="left:25px;top:125px">03 <span class="he">מזמור לדוד</span>.mp3</div>
<div class="t" style="left:175px;top:125px">I:\My Music\<span class="he">מושב</span>\<span class="he">מלאכים</span>\</div>
<div class="t" style="left:325px;top:125px;letter-spacing:0.25px">ID3v2.3 (ID3v1 ID3v2.3)</div>
<div class="t" style="left:475px;top:125px"><span class="he">מזמור לדוד</span></div>
<div class="t" style="left:626px;top:125px"><span class="he">מושב</span></div>
<div class="t" style="left:775px;top:125px"><span class="he">מלאכים</span></div>
<div class="a" style="left:20px;top:139px;width:832px;height:17px;background:#ECE9D8"></div>
<div class="ficon" style="left:6px;top:139px"><svg width="14" height="16"><path d="M0.5 0.5H9L13.5 5V15.5H0.5Z" fill="#F8FAFC" stroke="#8C9AB0"/><path d="M9 0.5V5H13.5" fill="#DCE4EE" stroke="#8C9AB0"/><path d="M7 3V11" stroke="#2A8AB4" stroke-width="1.4"/><ellipse cx="5.5" cy="11.5" rx="2.6" ry="2" fill="#2A8AB4"/><path d="M7 3C8 5 10 5 10 8" stroke="#2A8AB4" stroke-width="1.2" fill="none"/></svg></div>
<div class="t" style="left:25px;top:142px">07 <span class="he">למען אחי</span>.mp3</div>
<div class="t" style="left:175px;top:142px">I:\My Music\<span class="he">מושב</span>\<span class="he">מלאכים</span>\</div>
<div class="t" style="left:325px;top:142px;letter-spacing:0.25px">ID3v2.3 (ID3v1 ID3v2.3)</div>
<div class="t" style="left:475px;top:142px"><span class="he">למען אחי</span></div>
<div class="t" style="left:626px;top:142px"><span class="he">מושב</span></div>
<div class="t" style="left:775px;top:142px"><span class="he">מלאכים</span></div>
<div class="a" style="left:20px;top:156px;width:832px;height:17px;background:#ECE9D8"></div>
<div class="ficon" style="left:6px;top:156px"><svg width="14" height="16"><path d="M0.5 0.5H9L13.5 5V15.5H0.5Z" fill="#F8FAFC" stroke="#8C9AB0"/><path d="M9 0.5V5H13.5" fill="#DCE4EE" stroke="#8C9AB0"/><path d="M7 3V11" stroke="#2A8AB4" stroke-width="1.4"/><ellipse cx="5.5" cy="11.5" rx="2.6" ry="2" fill="#2A8AB4"/><path d="M7 3C8 5 10 5 10 8" stroke="#2A8AB4" stroke-width="1.2" fill="none"/></svg></div>
<div class="t" style="left:25px;top:159px">08 <span class="he">כל ישראל</span>.mp3</div>
<div class="t" style="left:175px;top:159px">I:\My Music\<span class="he">מושב</span>\<span class="he">מלאכים</span>\</div>
<div class="t" style="left:325px;top:159px;letter-spacing:0.25px">ID3v2.3 (ID3v1 ID3v2.3)</div>
<div class="t" style="left:475px;top:159px"><span class="he">כל ישראל</span></div>
<div class="t" style="left:626px;top:159px"><span class="he">מושב</span></div>
<div class="t" style="left:775px;top:159px"><span class="he">מלאכים</span></div>
<div class="a" style="left:20px;top:173px;width:832px;height:17px;background:#ECE9D8"></div>
<div class="ficon" style="left:6px;top:173px"><svg width="14" height="16"><path d="M0.5 0.5H9L13.5 5V15.5H0.5Z" fill="#F8FAFC" stroke="#8C9AB0"/><path d="M9 0.5V5H13.5" fill="#DCE4EE" stroke="#8C9AB0"/><path d="M7 3V11" stroke="#2A8AB4" stroke-width="1.4"/><ellipse cx="5.5" cy="11.5" rx="2.6" ry="2" fill="#2A8AB4"/><path d="M7 3C8 5 10 5 10 8" stroke="#2A8AB4" stroke-width="1.2" fill="none"/></svg></div>
<div class="t" style="left:25px;top:176px">09 <span class="he">ה' שפתי</span>.mp3</div>
<div class="t" style="left:175px;top:176px">I:\My Music\<span class="he">מושב</span>\<span class="he">מלאכים</span>\</div>
<div class="t" style="left:325px;top:176px;letter-spacing:0.25px">ID3v2.3 (ID3v1 ID3v2.3)</div>
<div class="t" style="left:475px;top:176px"><span class="he">ה' שפתי</span></div>
<div class="t" style="left:626px;top:176px"><span class="he">מושב</span></div>
<div class="t" style="left:775px;top:176px"><span class="he">מלאכים</span></div>
<div class="a" style="left:20px;top:190px;width:832px;height:17px;background:#ECE9D8"></div>
<div class="ficon" style="left:6px;top:190px"><svg width="14" height="16"><path d="M0.5 0.5H9L13.5 5V15.5H0.5Z" fill="#F8FAFC" stroke="#8C9AB0"/><path d="M9 0.5V5H13.5" fill="#DCE4EE" stroke="#8C9AB0"/><path d="M7 3V11" stroke="#2A8AB4" stroke-width="1.4"/><ellipse cx="5.5" cy="11.5" rx="2.6" ry="2" fill="#2A8AB4"/><path d="M7 3C8 5 10 5 10 8" stroke="#2A8AB4" stroke-width="1.2" fill="none"/></svg></div>
<div class="t" style="left:25px;top:193px">10 <span class="he">אב שמע</span>.mp3</div>
<div class="t" style="left:175px;top:193px">I:\My Music\<span class="he">מושב</span>\<span class="he">מלאכים</span>\</div>
<div class="t" style="left:325px;top:193px;letter-spacing:0.25px">ID3v2.3 (ID3v1 ID3v2.3)</div>
<div class="t" style="left:475px;top:193px"><span class="he">אב שמע</span></div>
<div class="t" style="left:626px;top:193px"><span class="he">מושב</span></div>
<div class="t" style="left:775px;top:193px"><span class="he">מלאכים</span></div>
</div>

<div class="a" style="left:1150px;top:72px;width:3px;height:743px;background:#F2F1EC"></div>
<!-- scrollbar -->
<div class="a" style="left:298px;top:797px;width:852px;height:18px;background:linear-gradient(90deg,#F4F3EE,#FDFDFA 40%,#F4F3EE)"></div>
<div class="a" style="left:298px;top:797px;width:852px;height:1px;background:#EEF2F4"></div>
<div class="a" style="left:299px;top:798px;width:15px;height:15px;border:1px solid #E4ECFC;border-radius:2px;background:linear-gradient(135deg,#CCDBFC,#B8CCF6)"><svg class="a" style="left:2px;top:2px" width="10" height="10"><path d="M7 1.5L3.5 5L7 8.5" stroke="#4A5A8C" stroke-width="2" fill="none"/></svg></div>
<div class="a" style="left:316px;top:798px;width:410px;height:15px;border:1px solid #B4C8F6;border-radius:2px;background:linear-gradient(#CCDAFC,#C0D2FA 50%,#B4C8F4)"></div>
<div class="a" style="left:516px;top:802px;width:9px;height:7px;background:repeating-linear-gradient(90deg,#EEF4FF 0,#EEF4FF 1px,#A8BCE8 1px,#A8BCE8 2px)"></div>
<div class="a" style="left:1134px;top:798px;width:15px;height:15px;border:1px solid #E4ECFC;border-radius:2px;background:linear-gradient(135deg,#CCDBFC,#B8CCF6)"><svg class="a" style="left:3px;top:2px" width="10" height="10"><path d="M3 1.5L6.5 5L3 8.5" stroke="#4A5A8C" stroke-width="2" fill="none"/></svg></div>

<!-- ===== STATUS BAR ===== -->
<div class="a" style="left:0;top:815px;width:1153px;height:1px;background:#A9A796"></div>
<div class="a" style="left:0;top:816px;width:1153px;height:1px;background:#fff"></div>
<div class="a" style="left:0;top:817px;width:1153px;height:17px;background:#ECE9D8"></div>
<div class="t" style="left:1px;top:820px">Ready</div>
<div class="t" style="left:892px;top:820px">11 (00:46:11 | 105.6MB)</div>
<div class="a" style="left:1017px;top:819px;width:1px;height:14px;background:#C7C5B2"></div>
<div class="t" style="left:1025px;top:820px;width:108px;overflow:hidden">11 (00:46:11 | 105.6MB)</div>
<div class="a" style="left:0;top:834px;width:92px;height:1px;background:#3C8F3C"></div>
<div class="a" style="left:92px;top:834px;width:1061px;height:1px;background:#3A6AC8"></div>

<!-- ===== TAGS DIALOG (inactive) ===== -->
<div class="a" style="left:241px;top:182px;width:542px;height:375px;border-radius:7px 7px 0 0;background:#7C84DA;overflow:hidden">
  <div class="a" style="left:0;top:0;width:542px;height:31px;background:linear-gradient(#6E7AC0 0,#6E7AC0 1px,#A0B4F2 1px,#98B2EE 3px,#7C9CE2 6px,#7896DE 10px,#7898E0 17px,#7EA6EA 21px,#84AAEE 26px,#7A8CE2 29px,#7A8CE2 31px)"></div>
  <div class="a" style="left:4px;top:30px;width:534px;height:340px;background:#ECE9D8;border-top:1px solid #F2F4EA"></div>
</div>
<div class="t" style="left:249px;top:191px;font:bold 13px/15px 'Liberation Sans';color:#E0E8F8;letter-spacing:0.3px">Tags</div>
<div class="a" style="left:756px;top:188px;width:21px;height:21px;border:1px solid #D8C4E0;border-radius:3px;background:linear-gradient(135deg,#BC6A86,#A85472 60%,#A04C6C)"><svg class="a" style="left:4px;top:4px" width="12" height="12"><path d="M1.5 1.5L10.5 10.5M10.5 1.5L1.5 10.5" stroke="#fff" stroke-width="2"/></svg></div>

<!-- Metadata group -->
<div class="a" style="left:257px;top:230px;width:327px;height:279px;border:1px solid #D0D0BF;border-radius:4px"></div>
<div class="t" style="left:262px;top:224px;padding:0 2px;background:#ECE9D8;color:#1A4CC0">Metadata</div>
<div class="a" style="left:265px;top:243px;width:279px;height:252px;background:#fff;border:1px solid #84847A"></div>
<div class="a" style="left:270px;top:315px;width:272px;height:14px;background:#ECE9D8"></div>
<div class="t" style="left:273px;top:245px;line-height:14px;letter-spacing:-0.8px">ALBUM
ARTIST
BAND
GENRE
LANGUAGE
LENGTH
TITLE
TRACK
YEAR</div>
<div class="t" style="left:352px;top:245px;line-height:14px"><span class="he">מלאכים</span>
<span class="he">מושב</span>
<span class="he">מושב</span>
<span class="he">נשמה</span>
&lt; blank &gt;
&lt; keep &gt;
&lt; keep &gt;
&lt; keep &gt;
2005</div>
<div class="tbtn" style="left:550px;top:243px"><svg class="a" style="left:4px;top:3px" width="14" height="15"><rect x="0.5" y="0.5" width="11" height="13" fill="#C8DCF4" stroke="#5A6C98"/><rect x="1" y="9" width="10" height="4" fill="#9CC4F0"/><path d="M7 1L8.4 4.3L12 4.6L9.3 6.9L10.1 10.4L7 8.6L3.9 10.4L4.7 6.9L2 4.6L5.6 4.3Z" fill="#F4E43C" stroke="#C8A818" stroke-width="0.6"/></svg></div>
<div class="tbtn" style="left:550px;top:272px"><svg class="a" style="left:4px;top:3px" width="14" height="15"><rect x="0.5" y="1.5" width="11" height="13" fill="#C8DCF4" stroke="#5A6C98"/><rect x="1" y="10" width="10" height="4" fill="#9CC4F0"/><path d="M4 9L11 2" stroke="#E8D040" stroke-width="2.4"/></svg></div>
<div class="tbtn" style="left:550px;top:302px"><svg class="a" style="left:3px;top:3px" width="17" height="16"><path d="M2.5 2.5L14.5 14.5M14.5 2.5L2.5 14.5" stroke="#D42A18" stroke-width="2.4" stroke-linecap="round"/></svg></div>

<!-- Cover group -->
<div class="a" style="left:590px;top:230px;width:179px;height:279px;border:1px solid #D0D0BF;border-radius:4px"></div>
<div class="t" style="left:595px;top:224px;padding:0 2px;background:#ECE9D8;color:#1A4CC0">Cover 1/1</div>
<svg class="a" style="left:599px;top:243px" width="130" height="131"><use href="#art"/></svg>
<div class="tbtn" style="left:736px;top:242px"><svg class="a" style="left:4px;top:3px" width="14" height="15"><rect x="0.5" y="0.5" width="11" height="13" fill="#C8DCF4" stroke="#5A6C98"/><rect x="1" y="9" width="10" height="4" fill="#9CC4F0"/><path d="M7 1L8.4 4.3L12 4.6L9.3 6.9L10.1 10.4L7 8.6L3.9 10.4L4.7 6.9L2 4.6L5.6 4.3Z" fill="#F4E43C" stroke="#C8A818" stroke-width="0.6"/></svg></div>
<div class="tbtn" style="left:736px;top:272px"><svg class="a" style="left:4px;top:3px" width="16" height="16"><rect x="0.5" y="0.5" width="14" height="15" rx="1" fill="#5656B0" stroke="#3A3A8A"/><rect x="2" y="1" width="11" height="7" fill="#E8E8EE"/><rect x="3" y="11" width="9" height="5" fill="#3E3E96"/><rect x="8" y="12" width="3" height="3" fill="#fff"/></svg></div>
<div class="tbtn" style="left:736px;top:301px"><svg class="a" style="left:3px;top:3px" width="17" height="16"><path d="M2.5 2.5L14.5 14.5M14.5 2.5L2.5 14.5" stroke="#D42A18" stroke-width="2.4" stroke-linecap="round"/></svg></div>
<div class="t" style="left:636px;top:405px">image/jpeg</div>
<div class="t" style="left:642px;top:418px">200x200</div>

<div class="a" style="left:775px;top:548px;width:2px;height:2px;background:#B8B5A4;box-shadow:1px 1px 0 #fff"></div><div class="a" style="left:771px;top:548px;width:2px;height:2px;background:#B8B5A4;box-shadow:1px 1px 0 #fff"></div><div class="a" style="left:767px;top:548px;width:2px;height:2px;background:#B8B5A4;box-shadow:1px 1px 0 #fff"></div><div class="a" style="left:775px;top:544px;width:2px;height:2px;background:#B8B5A4;box-shadow:1px 1px 0 #fff"></div><div class="a" style="left:771px;top:544px;width:2px;height:2px;background:#B8B5A4;box-shadow:1px 1px 0 #fff"></div><div class="a" style="left:775px;top:540px;width:2px;height:2px;background:#B8B5A4;box-shadow:1px 1px 0 #fff"></div>
<!-- ===== EDIT TAG INFO (active) ===== -->
<div class="a" style="left:445px;top:424px;width:325px;height:192px;border-radius:7px 7px 0 0;background:#0842D8;overflow:hidden">
  <div class="a" style="left:0;top:0;width:325px;height:30px;background:linear-gradient(#0A3A98 0,#0A3A98 1px,#3D8CF8 1px,#2A7AF4 3px,#0A60EA 5px,#0054E0 10px,#0054E2 18px,#006CF2 22px,#0070F4 26px,#0040C8 28px,#0030B0 29px)"></div>
  <div class="a" style="left:4px;top:29px;width:317px;height:159px;background:#ECE9D8;border-top:1px solid #F4F4EC"></div>
</div>
<div class="t" style="left:453px;top:433px;font:bold 13px/15px 'Liberation Sans';color:#fff;letter-spacing:0.2px">Edit tag info</div>
<div class="a" style="left:743px;top:430px;width:21px;height:21px;border:1px solid #fff;border-radius:3px;background:linear-gradient(135deg,#F0906C,#D8502C 60%,#C43C1C)"><svg class="a" style="left:4px;top:4px" width="12" height="12"><path d="M1.5 1.5L10.5 10.5M10.5 1.5L1.5 10.5" stroke="#fff" stroke-width="2"/></svg></div>
<div class="t" style="left:455px;top:461px">Field:</div>
<div class="edit" style="left:455px;top:475px;width:305px;height:21px"><div class="t" style="left:5px;top:3px;letter-spacing:-0.9px">LANGUAGE</div><div class="ddb"></div></div>
<div class="t" style="left:455px;top:504px">Value:</div>
<div class="edit" style="left:455px;top:519px;width:305px;height:55px"><div class="t" style="left:5px;top:3px">Hebrew</div>
  <div class="a" style="right:1px;top:1px;width:17px;height:51px;background:#F3F2EC"></div>
  <div class="a" style="right:1px;top:1px;width:17px;height:17px;border:1px solid #E8E6DC;border-radius:2px;background:#F0EFE8"><svg class="a" style="left:4px;top:5px" width="9" height="6"><path d="M1 5L4.5 1.5L8 5" stroke="#C8C6BC" stroke-width="2" fill="none"/></svg></div>
  <div class="a" style="right:1px;bottom:1px;width:17px;height:17px;border:1px solid #E8E6DC;border-radius:2px;background:#F0EFE8"><svg class="a" style="left:4px;top:5px" width="9" height="6"><path d="M1 1L4.5 4.5L8 1" stroke="#C8C6BC" stroke-width="2" fill="none"/></svg></div>
</div>
<div class="xpbtn" style="left:605px;top:583px;width:73px;height:21px;border-color:#003C74;box-shadow:inset 0 0 0 1px #8CB4F2,inset 0 -1px 0 2px #6A9AE8"><div class="t" style="left:0;width:71px;top:4px;text-align:center">OK</div></div>
<div class="xpbtn" style="left:686px;top:583px;width:73px;height:21px"><div class="t" style="left:0;width:71px;top:4px;text-align:center">Cancel</div></div>

<div class="a" style="left:762px;top:608px;width:2px;height:2px;background:#B8B5A4;box-shadow:1px 1px 0 #fff"></div><div class="a" style="left:758px;top:608px;width:2px;height:2px;background:#B8B5A4;box-shadow:1px 1px 0 #fff"></div><div class="a" style="left:754px;top:608px;width:2px;height:2px;background:#B8B5A4;box-shadow:1px 1px 0 #fff"></div><div class="a" style="left:762px;top:604px;width:2px;height:2px;background:#B8B5A4;box-shadow:1px 1px 0 #fff"></div><div class="a" style="left:758px;top:604px;width:2px;height:2px;background:#B8B5A4;box-shadow:1px 1px 0 #fff"></div><div class="a" style="left:762px;top:600px;width:2px;height:2px;background:#B8B5A4;box-shadow:1px 1px 0 #fff"></div>
<!-- ===== RED ANNOTATIONS ===== -->
<svg class="a" style="left:0;top:0" width="1153" height="835" fill="none" stroke="#F00000" stroke-width="6.5" stroke-linecap="round" stroke-linejoin="round">
<path d="M518 266L518.5 212L507 235"/>
<path d="M545 243C550 236 558 232 566 231.5C574 231 583 233 586 240C588 248 587 258 583 265C578 272 570 274 562 273.5C552 273 544 268 540 260C538 254 540 248 545 243Z"/>
<path d="M405.5 472C409 465 414 462 419 463C424 465 424.5 472 424.5 480C424.5 489 424 496 417 498C410 499 405 495 405 490C406 486 414 487 424 488L443 487"/>
<path d="M444 483Q447 470 457 466Q475 462 493 463Q510 464 521 467Q531 472 531 482Q531 494 523 500Q505 504 483 503Q466 501 457 496Q448 490 444 483Z"/>
<path d="M413 526C418 524 428 524 433 529C436 534 434 538 428 539.5C422 540.5 416 540 416 540C424 541 431 543 433 548C434 554 429 558 420 560C410 561.5 400 562 391 563"/>
<path d="M445 531Q447 522 457 520Q475 517 495 518Q511 518 517 521Q522 527 521 534Q519 541 508 542Q485 544 463 543Q450 541 447 537Q445 534 445 531Z"/>
</svg>
</body></html>
